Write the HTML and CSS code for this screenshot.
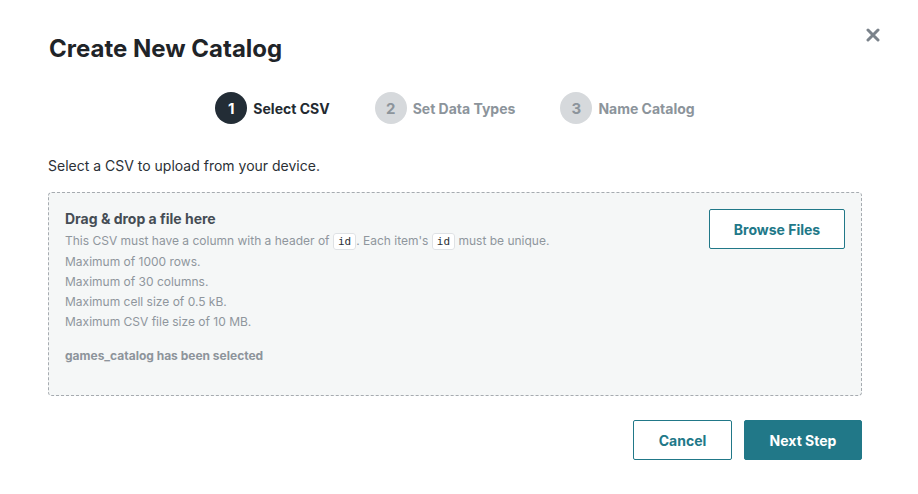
FILE: index.html
```html
<!DOCTYPE html>
<html>
<head>
<meta charset="utf-8">
<link rel="stylesheet" href="styles.css">
</head>
<body>
<div class="modal">
  <div class="header">
    <h1 class="title">Create New Catalog</h1>
    <button class="close" aria-label="Close">
      <svg width="14" height="14" viewBox="0 0 14 14"><path d="M2 2 L12 12 M12 2 L2 12" stroke="#7b838b" stroke-width="3" stroke-linecap="round"/></svg>
    </button>
  </div>
  <div class="steps">
    <div class="step active"><span class="num">1</span><span class="label">Select CSV</span></div>
    <div class="step"><span class="num">2</span><span class="label">Set Data Types</span></div>
    <div class="step"><span class="num">3</span><span class="label">Name Catalog</span></div>
  </div>
  <p class="intro">Select a CSV to upload from your device.</p>
  <div class="dropzone">
    <div class="drop-info">
      <div class="drop-title">Drag &amp; drop a file here</div>
      <div class="rule">This CSV must have a column with a header of <code>id</code>. Each item's <code>id</code> must be unique.</div>
      <div class="rule">Maximum of 1000 rows.</div>
      <div class="rule">Maximum of 30 columns.</div>
      <div class="rule">Maximum cell size of 0.5 kB.</div>
      <div class="rule">Maximum CSV file size of 10 MB.</div>
      <div class="selected">games_catalog has been selected</div>
    </div>
    <button class="btn btn-outline browse">Browse Files</button>
  </div>
  <div class="footer">
    <button class="btn btn-outline cancel">Cancel</button>
    <button class="btn btn-primary next">Next Step</button>
  </div>
</div>
</body>
</html>
```
FILE: styles.css
```css
* { box-sizing: border-box; }
html, body { margin: 0; padding: 0; background: #fff; }
body {
  font-family: Inter, "Noto Sans", "Liberation Sans", sans-serif;
  color: #2b3036;
  width: 918px;
  height: 494px;
  overflow: hidden;
}
.modal {
  padding: 0 56px 0 48px;
}
.header {
  display: flex;
  justify-content: space-between;
  align-items: flex-start;
  padding-top: 34px;
}
.title {
  margin: 0;
  font-size: 24px;
  font-weight: 700;
  line-height: 30px;
  color: #1f2428;
  padding-left: 1px;
}
.close {
  border: 0;
  background: none;
  padding: 0;
  margin: -6px -18px 0 0;
  width: 14px;
  height: 14px;
  display: flex;
}
.steps {
  display: flex;
  justify-content: center;
  gap: 45px;
  margin-top: 28px;
}
.step {
  display: flex;
  align-items: center;
  gap: 6px;
}
.num {
  width: 32px;
  height: 32px;
  border-radius: 50%;
  background: #d6d9dc;
  color: #8c949b;
  font-size: 15px;
  font-weight: 700;
  display: flex;
  align-items: center;
  justify-content: center;
}
.label {
  font-size: 14px;
  font-weight: 700;
  color: #8c949b;
}
.step.active .num { background: #232d36; color: #fff; }
.step.active .label { color: #232a31; }
.intro {
  margin: 32px 0 0;
  font-size: 14px;
  line-height: 20px;
  color: #2b3036;
}
.dropzone {
  margin-top: 16px;
  height: 204px;
  border: 1px dashed #a6abb0;
  border-radius: 4px;
  background: #f5f7f7;
  display: flex;
  justify-content: space-between;
  align-items: flex-start;
  padding: 16px 16px 0 16px;
}
.drop-title {
  font-size: 14px;
  font-weight: 700;
  line-height: 20px;
  margin-bottom: 2px;
  color: #454d55;
}
.rule {
  font-size: 12px;
  line-height: 20px;
  color: #8f969d;
}
code {
  font-family: "DejaVu Sans Mono", monospace;
  font-size: 11px;
  color: #2b3036;
  background: #fff;
  border: 1px solid #dfe2e5;
  border-radius: 3px;
  padding: 1px 4px;
}
.selected {
  margin-top: 15px;
  font-size: 12px;
  font-weight: 700;
  color: #8d949b;
  line-height: 18px;
}
.btn {
  font-family: inherit;
  font-size: 14px;
  font-weight: 700;
  border-radius: 2px;
  cursor: pointer;
}
.btn-outline {
  background: #fff;
  border: 1px solid #217888;
  color: #217888;
}
.btn-primary {
  background: #217888;
  border: 1px solid #217888;
  color: #fff;
}
.browse {
  width: 136px;
  height: 40px;
}
.footer {
  display: flex;
  justify-content: flex-end;
  gap: 12px;
  margin-top: 24px;
}
.cancel { width: 99px; height: 40px; }
.next { width: 118px; height: 40px; }
```
